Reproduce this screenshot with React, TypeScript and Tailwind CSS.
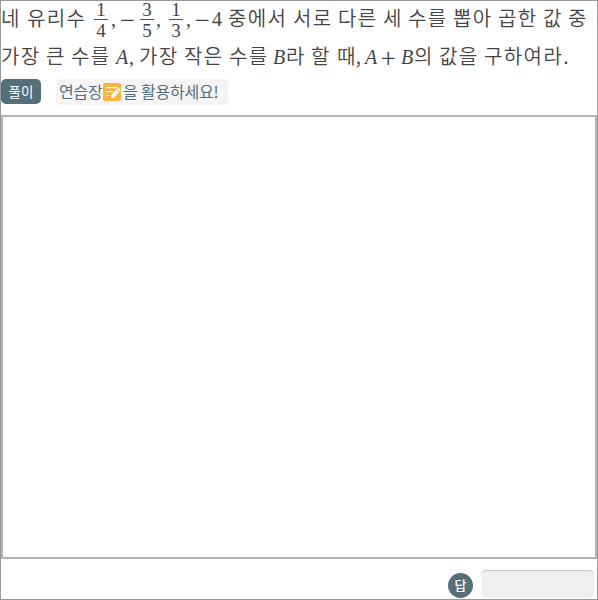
import type { ReactNode } from 'react';

const K = 'shrink-0 whitespace-nowrap tracking-[1.4px]';
const M = "shrink-0 whitespace-nowrap font-['Liberation_Serif',serif] tracking-normal";

function Word({ w, children }: { w: string; children: ReactNode }) {
  return <span className={`${K} ${w}`}>{children}</span>;
}

function MathText({ w, children }: { w: string; children: ReactNode }) {
  return <span className={`${M} ${w}`}>{children}</span>;
}

function Operator({ w, children }: { w: string; children: ReactNode }) {
  return (
    <span className={`shrink-0 whitespace-nowrap pt-px font-['Noto_Sans_CJK_KR',sans-serif] text-[27px] font-extralight ${w}`}>
      {children}
    </span>
  );
}

function Fraction({ top, bottom, w }: { top: string; bottom: string; w: string }) {
  return (
    <span className={`shrink-0 pl-px ${w}`}>
      <span className="flex w-[14px] flex-col items-center font-['Liberation_Serif',serif] text-[19px] leading-[18px]">
        <span className="h-[18px]">{top}</span>
        <span className="h-px w-full bg-[#555]" />
        <span className="mt-[2px] h-[18px]">{bottom}</span>
      </span>
    </span>
  );
}

function NoteIcon() {
  return (
    <svg viewBox="0 0 18 18" className="h-[18px] w-[18px] shrink-0">
      <rect width="18" height="18" rx="2.5" fill="#ffb43e" />
      <path d="M3 4.7h11M3 8.6h7M3 12.5h3.5" stroke="#fff" strokeWidth="1.2" />
      <path d="M8 12.2 13.5 6.5l2.6 2.6-5.5 5.6H8z" fill="#fff" />
      <path d="m14.2 5.9.8-.8q.5-.4 1 0l1.4 1.4q.4.5 0 1l-.7.8z" fill="#fff" />
    </svg>
  );
}

export default function App() {
  return (
    <div className="flex h-[600px] w-[598px] flex-col overflow-hidden border border-[#999] bg-white font-['Noto_Sans_CJK_KR',sans-serif] text-[#444]">
      <div className="flex h-[36px] shrink-0 text-[20px] font-[350] leading-[34px]">
        <Word w="w-[25px]">네</Word>
        <Word w="w-[67px] pl-px">유리수</Word>
        <Fraction top="1" bottom="4" w="w-[18px]" />
        <MathText w="w-[9px] pt-px">,</MathText>
        <Operator w="w-[19px]">−</Operator>
        <Fraction top="3" bottom="5" w="w-[17px]" />
        <MathText w="w-[12px] pt-px">,</MathText>
        <Fraction top="1" bottom="3" w="w-[18px]" />
        <MathText w="w-[8px] pt-px">,</MathText>
        <Operator w="w-[18px] pl-px">−</Operator>
        <MathText w="w-[15px] pt-px">4</MathText>
        <Word w="w-[66px] pl-px">중에서</Word>
        <Word w="w-[45px]">서로</Word>
        <Word w="w-[45px]">다른</Word>
        <Word w="w-[25px]">세</Word>
        <Word w="w-[45px]">수를</Word>
        <Word w="w-[45px]">뽑아</Word>
        <Word w="w-[45px]">곱한</Word>
        <Word w="w-[25px]">값</Word>
        <Word w="w-[25px]">중</Word>
      </div>
      <div className="mt-[2px] flex h-[36px] shrink-0 text-[20px] font-[350] leading-[34px]">
        <Word w="w-[45px]">가장</Word>
        <Word w="w-[25px]">큰</Word>
        <Word w="w-[45px]">수를</Word>
        <MathText w="w-[13px] pt-px italic">A</MathText>
        <MathText w="w-[10px] pt-px">,</MathText>
        <Word w="w-[45px]">가장</Word>
        <Word w="w-[45px]">작은</Word>
        <Word w="w-[44px]">수를</Word>
        <MathText w="w-[13px] pt-px italic">B</MathText>
        <Word w="w-[25px]">라</Word>
        <Word w="w-[26px]">할</Word>
        <span className="w-[28px] shrink-0 whitespace-nowrap tracking-normal">때,</span>
        <MathText w="w-[15px] pt-px italic">A</MathText>
        <Operator w="w-[21px] pl-px">+</Operator>
        <MathText w="w-[13px] pt-px italic">B</MathText>
        <Word w="w-[25px]">의</Word>
        <Word w="w-[45px]">값을</Word>
        <Word w="w-[90px]">구하여라.</Word>
      </div>
      <div className="mt-[3px] flex h-[26px] shrink-0 items-center">
        <div className="mt-px h-[25px] w-[40px] rounded-[5px] bg-[#546e7a] text-center text-[13.5px] leading-[24px] text-white">풀이</div>
        <div className="ml-[15px] mt-px flex h-[26px] w-[172px] items-center rounded-[4px] bg-[#f5f5f5] pl-[3px] text-[16px] leading-[24px] tracking-[-0.2px] text-[#546e7a]">
          <span className="w-[44px] whitespace-nowrap pb-[2px]">연습장</span>
          <NoteIcon />
          <span className="ml-[2px] whitespace-nowrap pb-[2px]">을 활용하세요!</span>
        </div>
      </div>
      <div className="mt-[11px] h-[444px] w-[596px] shrink-0 border-2 border-[#b3b3b3]" />
      <div className="mt-[11px] flex h-[29px] shrink-0 pl-[447px]">
        <div className="mt-[3px] h-[25px] w-[25px] rounded-full bg-[#546e7a] text-center text-[13px] font-medium leading-[23px] text-white">답</div>
        <div className="ml-[8px] h-[28px] w-[113px] rounded-[5px] border-t border-[#c8c8c8] bg-[#efefef]" />
      </div>
    </div>
  );
}
